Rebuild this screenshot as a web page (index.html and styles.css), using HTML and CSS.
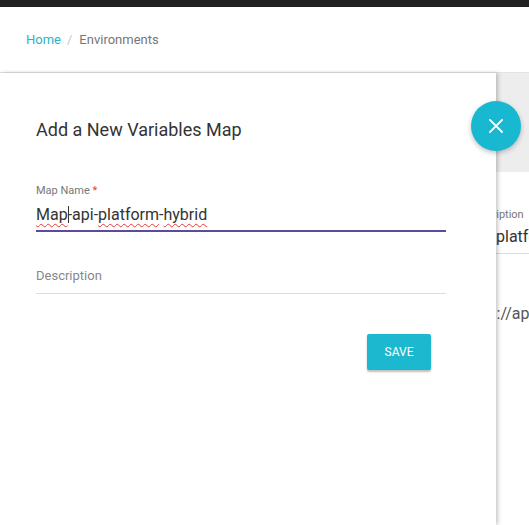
FILE: index.html
```html
<!DOCTYPE html>
<html>
<head>
<meta charset="utf-8">
<link rel="stylesheet" href="styles.css">
</head>
<body>
<div class="topbar"></div>
<header class="header">
  <nav class="crumbs"><a class="crumb-link">Home</a><span class="crumb-sep">/</span><span class="crumb-cur">Environments</span></nav>
</header>
<main class="page">
  <div class="page-band"></div>
  <div class="page-form">
    <div class="bg-label">Description</div>
    <div class="bg-value">api-platform</div>
    <div class="bg-url">https://api</div>
  </div>
</main>

<aside class="drawer">
  <h2 class="drawer-title">Add a New Variables Map</h2>
  <div class="field">
    <label class="field-label">Map Name <span class="req">*</span></label>
    <div class="field-input active"><span class="sp">Map</span><span class="caret"></span>-api-<span class="sp">platform</span>-<span class="sp">hybrid</span></div>
  </div>
  <div class="field field-desc">
    <div class="field-input empty">Description</div>
  </div>
  <div class="actions"><button class="btn-save">SAVE</button></div>
  <button class="fab" aria-label="close">
    <svg width="14" height="14" viewBox="0 0 14 14"><path d="M1 1L13 13M13 1L1 13" stroke="#fff" stroke-width="1.8" stroke-linecap="square"/></svg>
  </button>
</aside>
</body>
</html>
```
FILE: styles.css
```css
* { box-sizing: border-box; }
html, body { margin: 0; padding: 0; }
body {
  font-family: Roboto, "Noto Sans", sans-serif;
  background: #fff;
  width: 529px;
  height: 525px;
  overflow: hidden;
  position: relative;
}
.topbar { height: 7px; background: #212121; }
.header {
  height: 66px;
  background: #fff;
  border-bottom: 1px solid #e3e3e3;
  padding: 25px 0 0 26px;
}
.crumbs { font-size: 13px; line-height: 16px; display: flex; }
.crumb-link { color: #2ab4c9; }
.crumb-sep { color: #c8c8c8; margin: 0 7px 0 6px; }
.crumb-cur { color: #777; }

.page { background: #fff; }
.page-band { height: 99px; background: #ededed; }
.page-form { padding: 36px 0 0 468px; }
.bg-label { font-size: 11px; line-height: 14px; color: #777; }
.bg-value {
  font-size: 16px; line-height: 24px; color: #333;
  margin: 3px 0 0 2px; padding-bottom: 4px;
  border-bottom: 1px solid #ddd; width: 200px;
}
.bg-url { font-size: 16px; line-height: 24px; color: #555; margin: 48px 0 0 -8px; }

.drawer {
  position: absolute;
  left: 0; top: 73px;
  width: 496px; height: 452px;
  background: #fff;
  box-shadow: 2px 0 4px rgba(0,0,0,0.22);
  padding: 45px 50px 0 36px;
}
.drawer-title {
  margin: 0;
  font-size: 18px; line-height: 24px;
  font-weight: 400; color: #333;
}
.field { margin-top: 42px; }
.field-label { display: block; font-size: 11px; line-height: 14px; color: #777; }
.req { color: #e0403f; }
.field-input {
  font-size: 16px; line-height: 24px; color: #333;
  border-bottom: 1px solid #ddd;
  position: relative;
}
.field-input.active { border-bottom: 2px solid #5c4a9a; padding: 5px 0 3px; }
.sp {
  text-decoration: underline wavy #e53935;
  text-decoration-thickness: 1px;
  text-underline-offset: 3px;
}
.caret {
  display: inline-block; width: 1px; height: 17px;
  background: #333; vertical-align: -3px; margin: 0 -1px 0 0;
}
.field-desc { margin-top: 35px; }
.field-input.empty { font-size: 13px; line-height: 18px; color: #888; padding-bottom: 8px; }
.actions { display: flex; justify-content: flex-end; margin-top: 40px; padding-right: 15px; }
.btn-save {
  width: 64px; height: 36px;
  background: #1cb8cf; color: #fff;
  border: 0; border-radius: 2px;
  font-family: Roboto, sans-serif; font-size: 12px;
  box-shadow: 0 2px 2px rgba(0,0,0,0.25);
}
.fab {
  position: absolute;
  left: 471px; top: 28px;
  width: 50px; height: 50px;
  border-radius: 50%;
  border: 0; padding: 0;
  background: #17b8d0;
  display: flex; align-items: center; justify-content: center;
  box-shadow: 0 2px 5px rgba(0,0,0,0.25);
}
```
